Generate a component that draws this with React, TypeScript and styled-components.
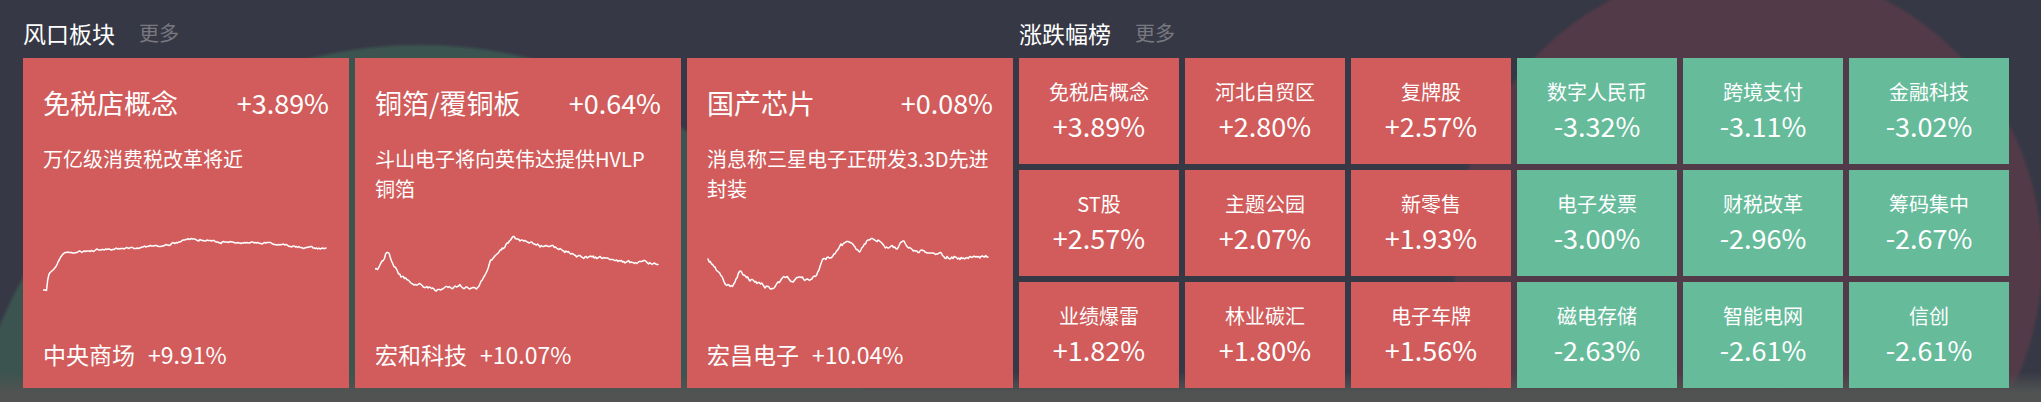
import React from "react";
import styled, { createGlobalStyle } from "styled-components";

const GlobalStyle = createGlobalStyle`
  html, body {
    margin: 0;
    padding: 0;
    background: #373845;
  }
  body {
    font-family: "Noto Sans CJK SC", "Noto Sans", sans-serif;
    color: #ffffff;
  }
`;

const Page = styled.main`
  width: 2041px;
  height: 402px;
  overflow: hidden;
  box-sizing: border-box;
  padding-left: 23px;
  display: grid;
  grid-template-columns: 990px 990px;
  column-gap: 6px;
  align-content: start;
  background:
    linear-gradient(to bottom, rgba(80, 83, 82, 0) 372px, rgba(80, 83, 82, 1) 392px),
    radial-gradient(circle 294px at 1748px 260px, #523a48 292px, rgba(82, 58, 72, 0) 296px),
    radial-gradient(circle 455px at 420px 500px, #3b544f 453px, rgba(59, 84, 79, 0) 457px),
    #373845;
`;

const Section = styled.section`
  display: flex;
  flex-direction: column;
`;

const SectionHeader = styled.header`
  height: 58px;
  box-sizing: border-box;
  padding-top: 8px;
  display: flex;
  align-items: center;
  gap: 24px;
`;

const SectionTitle = styled.h2`
  margin: 0;
  font-size: 23px;
  font-weight: 400;
  line-height: 30px;
  color: #ffffff;
`;

const MoreLink = styled.span`
  font-size: 20px;
  line-height: 30px;
  color: #777880;
`;

const CardGrid = styled.div`
  display: grid;
  grid-template-columns: repeat(3, 326px);
  column-gap: 6px;
  height: 330px;
`;

const Card = styled.article`
  background: #d15c5b;
  box-sizing: border-box;
  padding: 27px 20px 18px;
  display: flex;
  flex-direction: column;
`;

const CardHead = styled.div`
  display: flex;
  justify-content: space-between;
  align-items: center;
  height: 36px;
  font-size: 27px;
  line-height: 36px;
`;

const CardNews = styled.p`
  margin: 23px 0 0;
  height: 60px;
  font-size: 20px;
  line-height: 30px;
`;

const Chart = styled.svg`
  display: block;
  width: 286px;
  height: 134px;
  flex: none;
`;

const CardFoot = styled.div`
  display: flex;
  align-items: center;
  gap: 13px;
  height: 32px;
  font-size: 23px;
  line-height: 32px;
`;

const TileGrid = styled.div`
  display: grid;
  grid-template-columns: repeat(6, 160px);
  grid-template-rows: repeat(3, 106px);
  gap: 6px;
`;

const Tile = styled.div<{ $up: boolean }>`
  background: ${(p) => (p.$up ? "#d15c5b" : "#66bb9b")};
  display: flex;
  flex-direction: column;
  align-items: center;
  justify-content: center;
`;

const TileName = styled.div`
  font-size: 20px;
  line-height: 30px;
`;

const TileValue = styled.div`
  font-size: 27px;
  line-height: 38px;
`;

type Pt = [number, number];

function mulberry32(a: number) {
  return function () {
    a |= 0;
    a = (a + 0x6d2b79f5) | 0;
    let t = Math.imul(a ^ (a >>> 15), 1 | a);
    t = (t + Math.imul(t ^ (t >>> 7), 61 | t)) ^ t;
    return ((t ^ (t >>> 14)) >>> 0) / 4294967296;
  };
}

function buildPath(keys: Pt[], seed: number, amp: number, width = 283, offset = 0) {
  const rand = mulberry32(seed);
  const N = 240;
  let noise = 0;
  let d = "";
  for (let i = 0; i <= N; i++) {
    const x = (i / N) * width;
    let k = 0;
    while (k < keys.length - 2 && keys[k + 1][0] < x) k++;
    const [x0, y0] = keys[k];
    const [x1, y1] = keys[k + 1];
    const t = x1 === x0 ? 0 : Math.min(1, Math.max(0, (x - x0) / (x1 - x0)));
    const base = y0 + (y1 - y0) * t;
    noise = noise * 0.55 + (rand() - 0.5) * amp;
    const y = Math.round((base + noise) * 2) / 2;
    d += `${i === 0 ? "M" : "L"}${(x + offset).toFixed(1)} ${y.toFixed(1)} `;
  }
  return d;
}

const chart1: Pt[] = [
  [0, 86], [4, 86], [5, 71], [12, 64], [17, 54], [22, 49], [34, 48], [57, 46],
  [90, 44], [124, 41], [145, 35], [190, 39], [224, 39], [257, 43], [283, 45],
];

const chart2: Pt[] = [
  [0, 66], [3, 66], [6, 60], [12, 48], [15, 52], [19, 62], [26, 72], [36, 78],
  [48, 81], [62, 86], [75, 84], [85, 82], [95, 85], [103, 84], [110, 70],
  [115, 58], [121, 50], [128, 44], [138, 34], [161, 41], [183, 44], [196, 49],
  [205, 53], [228, 54], [250, 58], [283, 59],
];

const chart3: Pt[] = [
  [0, 55], [6, 63], [12, 69], [17, 78], [25, 83], [32, 66], [39, 74], [50, 79],
  [64, 85], [72, 76], [79, 73], [86, 78], [90, 73], [102, 78], [108, 71],
  [115, 56], [124, 53], [133, 41], [142, 39], [151, 49], [162, 34], [171, 36],
  [177, 43], [191, 43], [195, 36], [204, 46], [222, 48], [240, 53], [258, 54], [280, 53],
];

const cards = [
  { name: "免税店概念", pct: "+3.89%", news: "万亿级消费税改革将近", stock: "中央商场", stockPct: "+9.91%", path: buildPath(chart1, 11, 1.6) },
  { name: "铜箔/覆铜板", pct: "+0.64%", news: "斗山电子将向英伟达提供HVLP铜箔", stock: "宏和科技", stockPct: "+10.07%", path: buildPath(chart2, 23, 2.6) },
  { name: "国产芯片", pct: "+0.08%", news: "消息称三星电子正研发3.3D先进封装", stock: "宏昌电子", stockPct: "+10.04%", path: buildPath(chart3, 37, 3, 280, 1) },
];

const tiles: { name: string; pct: string }[] = [
  { name: "免税店概念", pct: "+3.89%" },
  { name: "河北自贸区", pct: "+2.80%" },
  { name: "复牌股", pct: "+2.57%" },
  { name: "数字人民币", pct: "-3.32%" },
  { name: "跨境支付", pct: "-3.11%" },
  { name: "金融科技", pct: "-3.02%" },
  { name: "ST股", pct: "+2.57%" },
  { name: "主题公园", pct: "+2.07%" },
  { name: "新零售", pct: "+1.93%" },
  { name: "电子发票", pct: "-3.00%" },
  { name: "财税改革", pct: "-2.96%" },
  { name: "筹码集中", pct: "-2.67%" },
  { name: "业绩爆雷", pct: "+1.82%" },
  { name: "林业碳汇", pct: "+1.80%" },
  { name: "电子车牌", pct: "+1.56%" },
  { name: "磁电存储", pct: "-2.63%" },
  { name: "智能电网", pct: "-2.61%" },
  { name: "信创", pct: "-2.61%" },
];

export default function App() {
  return (
    <>
      <GlobalStyle />
      <Page>
        <Section>
          <SectionHeader>
            <SectionTitle>风口板块</SectionTitle>
            <MoreLink>更多</MoreLink>
          </SectionHeader>
          <CardGrid>
            {cards.map((c) => (
              <Card key={c.name}>
                <CardHead>
                  <span>{c.name}</span>
                  <span>{c.pct}</span>
                </CardHead>
                <CardNews>{c.news}</CardNews>
                <Chart viewBox="0 0 286 134">
                  <path d={c.path} fill="none" stroke="#ffffff" strokeWidth={1.5} strokeLinejoin="round" strokeLinecap="round" />
                </Chart>
                <CardFoot>
                  <span>{c.stock}</span>
                  <span>{c.stockPct}</span>
                </CardFoot>
              </Card>
            ))}
          </CardGrid>
        </Section>
        <Section>
          <SectionHeader>
            <SectionTitle>涨跌幅榜</SectionTitle>
            <MoreLink>更多</MoreLink>
          </SectionHeader>
          <TileGrid>
            {tiles.map((t, i) => (
              <Tile key={i} $up={t.pct.startsWith("+")}>
                <TileName>{t.name}</TileName>
                <TileValue>{t.pct}</TileValue>
              </Tile>
            ))}
          </TileGrid>
        </Section>
      </Page>
    </>
  );
}
